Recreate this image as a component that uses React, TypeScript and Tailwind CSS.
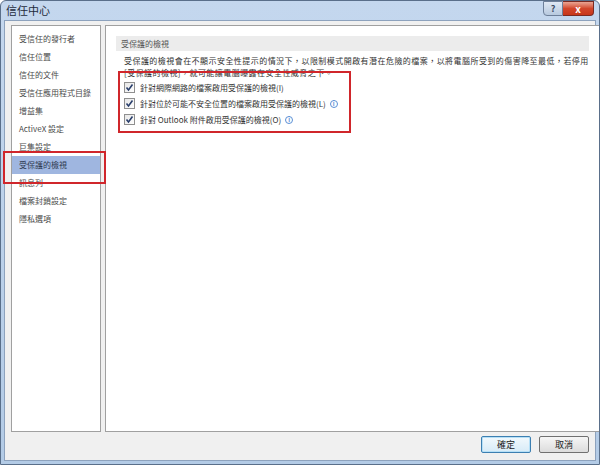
import React from 'react';

const navItems = [
  '受信任的發行者',
  '信任位置',
  '信任的文件',
  '受信任應用程式目錄',
  '增益集',
  'ActiveX 設定',
  '巨集設定',
  '受保護的檢視',
  '訊息列',
  '檔案封鎖設定',
  '隱私選項',
];

const options = [
  { label: '針對網際網路的檔案啟用受保護的檢視(I)', info: false },
  { label: '針對位於可能不安全位置的檔案啟用受保護的檢視(L)', info: true },
  { label: '針對 Outlook 附件啟用受保護的檢視(O)', info: true },
];

const CheckBox = () => (
  <span className="w-[11px] h-[11px] border border-[#8f8f8f] bg-gradient-to-br from-[#e6e6e6] to-white flex items-center justify-center shrink-0">
    <svg width="9" height="9" viewBox="0 0 9 9">
      <path d="M1.5 4.5 L3.5 7 L7.5 1.5" fill="none" stroke="#2a3f6c" strokeWidth="1.6" />
    </svg>
  </span>
);

const Info = () => (
  <span className="ml-[4px] w-[8px] h-[8px] rounded-full border border-[#5b8fd6] text-[#5b8fd6] text-[6px] leading-none flex items-center justify-center font-bold">
    i
  </span>
);

export default function App() {
  return (
    <div
      className="relative w-[600px] h-[465px] bg-gradient-to-b from-[#c4d7ee] to-[#b3cbe6] border border-[#5a6f8a] rounded-t-[6px] flex flex-col overflow-hidden"
      style={{ fontFamily: '"Noto Sans CJK TC", "Liberation Sans", sans-serif' }}
    >
      {/* title bar */}
      <div className="h-[19px] flex items-start justify-between shrink-0">
        <span className="pl-[5px] pt-[3px] text-[11px] leading-[13px] text-[#1e2b3c]">信任中心</span>
        <div className="flex mr-[5px]">
          <span className="w-[20px] h-[15px] border border-[#6d7f99] rounded-bl-[4px] bg-gradient-to-b from-[#dfe8f3] to-[#b7c9df] text-[9px] leading-[13px] text-center text-[#3a4b63] font-bold">?</span>
          <span className="w-[31px] h-[15px] border border-[#7a2a22] border-l-0 rounded-br-[4px] bg-gradient-to-b from-[#e9a493] via-[#d2462b] to-[#c7361a] text-[10px] leading-[13px] text-center text-white font-bold">x</span>
        </div>
      </div>

      {/* client area */}
      <div className="flex-1 mx-[3px] mb-[3px] bg-[#f0f0f0] border border-[#8da2bd] flex flex-col pt-[4px] pb-[7px]">
        <div className="flex-1 flex gap-[4px] pl-[6px] pr-[3px]">
          {/* left nav */}
          <div className="w-[91px] bg-white border border-[#a0a0a0] pt-[4px]">
            {navItems.map((item) => (
              <div
                key={item}
                className={`h-[18px] pl-[7px] text-[8px] leading-[18px] whitespace-nowrap ${
                  item === '受保護的檢視' ? 'bg-[#9fb6e0] text-[#2f3b52] w-[88px]' : 'text-[#4a4a4a]'
                }`}
              >
                {item}
              </div>
            ))}
          </div>

          {/* right content */}
          <div className="flex-1 bg-white border border-[#a0a0a0] pt-[10px] px-[10px]">
            <div className="h-[15px] bg-[#ececec] pl-[5px] text-[8px] leading-[15px] text-[#555]">受保護的檢視</div>
            <p className="mt-[4px] pl-[8px] text-[8px] leading-[12px] tracking-[0.45px] text-[#333] whitespace-nowrap">
              受保護的檢視會在不顯示安全性提示的情況下，以限制模式開啟有潛在危險的檔案，以將電腦所受到的傷害降至最低，若停用
              <br />
              [受保護的檢視]，就可能讓電腦曝露在安全性威脅之下。
            </p>
            <div className="mt-[3px] pl-[8px] flex flex-col gap-[5px]">
              {options.map((o) => (
                <div key={o.label} className="flex items-center h-[11px]">
                  <CheckBox />
                  <span className="ml-[5px] text-[8px] leading-[11px] text-[#333] whitespace-nowrap">{o.label}</span>
                  {o.info && <Info />}
                </div>
              ))}
            </div>
          </div>
        </div>

        {/* buttons */}
        <div className="flex justify-end gap-[8px] pr-[6px] pt-[4px]">
          <button className="w-[50px] h-[17px] border border-[#3c7fb1] rounded-[2px] bg-gradient-to-b from-[#f2f9fd] to-[#d7ebf7] text-[9px] leading-[15px] text-[#222] shadow-[inset_0_0_0_1px_#b6e0f7]">
            確定
          </button>
          <button className="w-[50px] h-[17px] border border-[#707070] rounded-[2px] bg-gradient-to-b from-[#f6f6f6] to-[#dcdcdc] text-[9px] leading-[15px] text-[#222]">
            取消
          </button>
        </div>
      </div>

      {/* annotation boxes */}
      <div className="absolute left-[117px] top-[70px] w-[233px] h-[62px] border-2 border-[#d0262b]" />
      <div className="absolute left-[2px] top-[150px] w-[103px] h-[33px] border-2 border-[#d0262b]" />
    </div>
  );
}
